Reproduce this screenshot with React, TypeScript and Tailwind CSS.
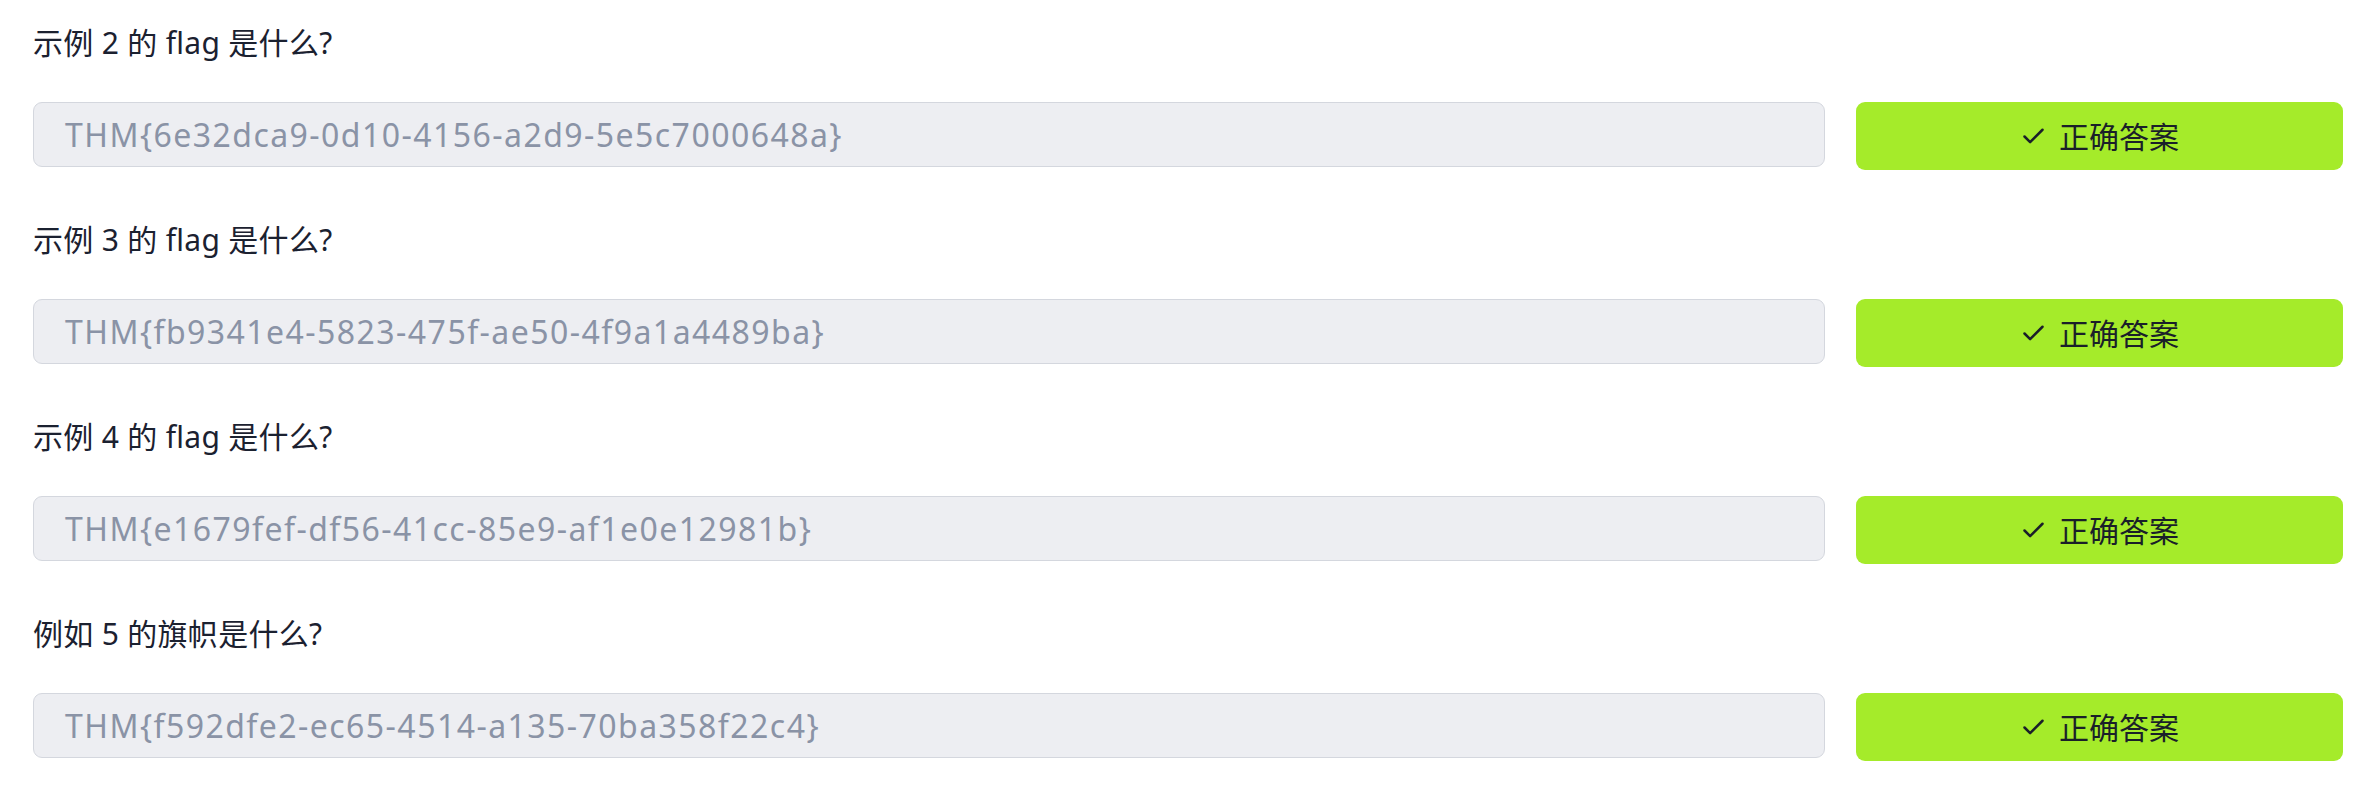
import React from "react";

const rows = [
  { label: "示例 2 的 flag 是什么?", answer: "THM{6e32dca9-0d10-4156-a2d9-5e5c7000648a}" },
  { label: "示例 3 的 flag 是什么?", answer: "THM{fb9341e4-5823-475f-ae50-4f9a1a4489ba}" },
  { label: "示例 4 的 flag 是什么?", answer: "THM{e1679fef-df56-41cc-85e9-af1e0e12981b}" },
  { label: "例如 5 的旗帜是什么?", answer: "THM{f592dfe2-ec65-4514-a135-70ba358f22c4}" },
];

function CheckIcon() {
  return (
    <svg width="27" height="27" viewBox="0 0 24 24" fill="none" stroke="#1a1f29" strokeWidth="2.2" strokeLinecap="round" strokeLinejoin="round">
      <path d="M20 6 9 17l-5-5" />
    </svg>
  );
}

export default function App() {
  return (
    <div className="w-[2355px] h-[789px] bg-white pt-[22px] pl-[33px] pr-[12px] font-['Noto_Sans','Noto_Sans_CJK_SC',sans-serif] overflow-hidden">
      {rows.map((r, i) => (
        <div key={i} className="mb-[49px]">
          <p className="text-[30px] leading-[42px] tracking-[0.3px] text-[#1b2130]">{r.label}</p>
          <div className="mt-[38px] flex items-start gap-[31px]">
            <div className="flex-1 h-[65px] rounded-[9px] border border-[#d4d7de] bg-[#edeef2] pl-[31px] flex items-center text-[32px] tracking-[1.45px] text-[#8a93a6]">
              {r.answer}
            </div>
            <button className="w-[487px] h-[68px] rounded-[9px] bg-[#a5eb2a] flex items-center justify-center gap-[12px] text-[30px] text-[#1a1f29]">
              <CheckIcon />
              <span>正确答案</span>
            </button>
          </div>
        </div>
      ))}
    </div>
  );
}
